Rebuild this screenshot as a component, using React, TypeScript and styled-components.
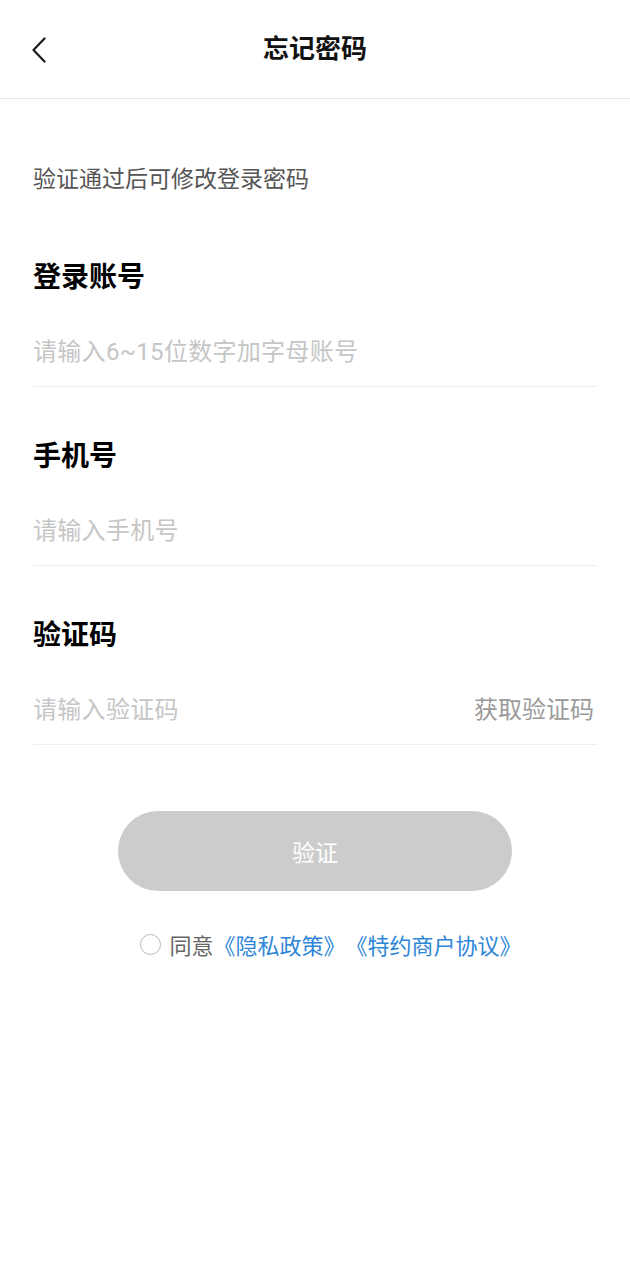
import React, { useState } from 'react';
import styled, { createGlobalStyle } from 'styled-components';

const GlobalStyle = createGlobalStyle`
  body {
    margin: 0;
    background: #ffffff;
    font-family: Roboto, "Noto Sans CJK SC", sans-serif;
  }
`;

const BackIcon: React.FC = () => (
  <svg width="16" height="26" viewBox="0 0 16 26" fill="none">
    <polyline
      points="13.5,1.5 2.5,13 13.5,24.5"
      stroke="#1a1a1a"
      strokeWidth="2.2"
      strokeLinecap="round"
      strokeLinejoin="round"
    />
  </svg>
);

type FieldProps = {
  label: string;
  placeholder: string;
  action?: string;
};

const Field: React.FC<FieldProps> = ({ label, placeholder, action }) => {
  const [value, setValue] = useState('');
  return (
    <FieldWrapper>
      <FieldLabel>{label}</FieldLabel>
      <InputRow>
        <FieldInput
          placeholder={placeholder}
          value={value}
          onChange={(e) => setValue(e.target.value)}
        />
        {action && <ActionText>{action}</ActionText>}
      </InputRow>
    </FieldWrapper>
  );
};

const App: React.FC = () => {
  const [agreed, setAgreed] = useState(false);
  return (
    <Page>
      <GlobalStyle />
      <Header>
        <BackButton>
          <BackIcon />
        </BackButton>
        <Title>忘记密码</Title>
      </Header>
      <Form>
        <Tip>验证通过后可修改登录密码</Tip>
        <Field label="登录账号" placeholder="请输入6~15位数字加字母账号" />
        <Field label="手机号" placeholder="请输入手机号" />
        <Field label="验证码" placeholder="请输入验证码" action="获取验证码" />
      </Form>
      <SubmitBtn>验证</SubmitBtn>
      <Agreement>
        <Radio checked={agreed} onClick={() => setAgreed(!agreed)} />
        <span>同意</span>
        <Link>《隐私政策》</Link>
        <Link>《特约商户协议》</Link>
      </Agreement>
    </Page>
  );
};

export default App;

const Page = styled.div`
  width: 630px;
  min-height: 1280px;
  background: #ffffff;
`;

const Header = styled.div`
  position: relative;
  display: flex;
  align-items: center;
  justify-content: center;
  height: 98px;
  border-bottom: 1px solid #e6e6e6;
`;

const BackButton = styled.div`
  position: absolute;
  left: 31px;
  top: 37px;
  display: flex;
  cursor: pointer;
`;

const Title = styled.div`
  font-size: 26px;
  font-weight: 700;
  color: #111111;
  line-height: 1;
`;

const Form = styled.div`
  display: flex;
  flex-direction: column;
  padding: 0 33px;
`;

const Tip = styled.div`
  margin-top: 64px;
  margin-bottom: 11px;
  font-size: 23px;
  line-height: 34px;
  color: #555555;
`;

const FieldWrapper = styled.div`
  display: flex;
  flex-direction: column;
  margin-top: 50px;
`;

const FieldLabel = styled.div`
  font-size: 28px;
  font-weight: 700;
  line-height: 40px;
  color: #000000;
`;

const InputRow = styled.div`
  display: flex;
  align-items: center;
  margin-top: 20px;
  height: 68px;
  border-bottom: 1px solid #eeeeee;
`;

const FieldInput = styled.input`
  flex: 1;
  min-width: 0;
  height: 34px;
  line-height: 34px;
  border: 0;
  outline: none;
  padding: 0;
  background: transparent;
  font-family: Roboto, "Noto Sans CJK SC", sans-serif;
  font-size: 24px;
  letter-spacing: 0.3px;
  color: #333333;
  &::placeholder {
    color: #c6c6c6;
  }
`;

const ActionText = styled.div`
  height: 34px;
  line-height: 34px;
  font-size: 24px;
  color: #9a9a9a;
  padding-right: 3px;
  cursor: pointer;
`;

const SubmitBtn = styled.div`
  display: flex;
  align-items: center;
  justify-content: center;
  width: 394px;
  height: 80px;
  margin: 66px auto 0;
  border-radius: 40px;
  background: #cccccc;
  color: #ffffff;
  font-size: 23px;
  cursor: pointer;
`;

const Agreement = styled.div`
  display: flex;
  align-items: center;
  justify-content: center;
  margin-top: 38px;
  padding-left: 32px;
  height: 30px;
  font-size: 22px;
  color: #666666;
`;

const Radio = styled.div<{ checked: boolean }>`
  box-sizing: border-box;
  width: 21px;
  height: 21px;
  margin-right: 8px;
  border-radius: 50%;
  border: 1.5px solid #b8b8b8;
  background: ${({ checked }) => (checked ? '#3a8ee6' : '#ffffff')};
  cursor: pointer;
`;

const Link = styled.span`
  color: #2e86d8;
  cursor: pointer;
`;
